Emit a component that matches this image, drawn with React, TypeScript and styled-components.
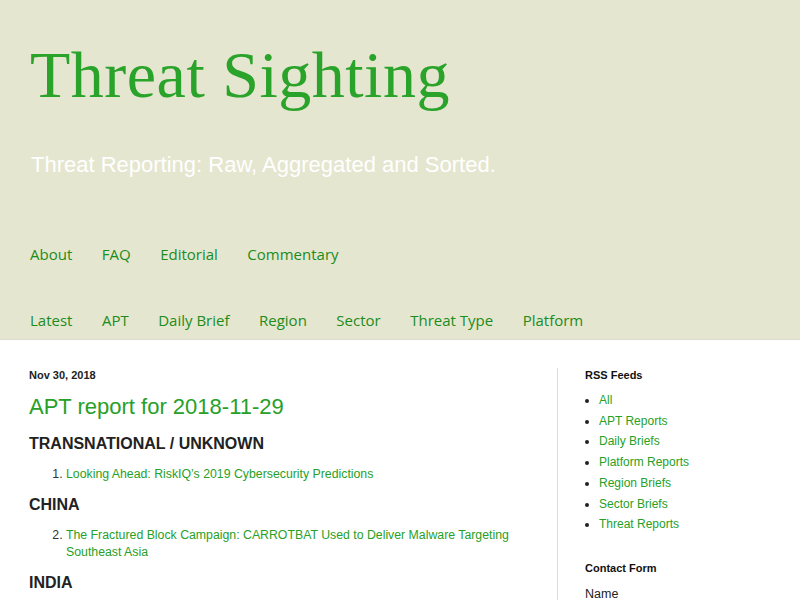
import React from "react";
import styled, { createGlobalStyle } from "styled-components";

const Global = createGlobalStyle`
  html, body { margin: 0; padding: 0; background: #fff; }
  body { font-family: "Liberation Sans", Arial, sans-serif; }
  a { text-decoration: none; color: inherit; }
`;

const GREEN = "#27a027";

const Header = styled.header`
  background: #e5e6cf;
  border-bottom: 1px solid #dcdcd0;
  height: 340px;
  box-sizing: border-box;
  padding: 30px 30px 0 30px;
  display: flex;
  flex-direction: column;
`;

const Title = styled.h1`
  margin: 0;
  font-family: "Liberation Serif", "Times New Roman", serif;
  font-weight: 400;
  font-size: 66px;
  line-height: 90px;
  color: #2aa32a;
  letter-spacing: 0.5px;
`;

const Tagline = styled.p`
  margin: 32px 0 0 1px;
  font-size: 22px;
  line-height: 26px;
  color: #ffffff;
`;

const Nav = styled.nav<{ $top: number }>`
  display: flex;
  gap: 29.5px;
  margin-top: ${(p) => p.$top}px;
  font-family: "Open Sans", sans-serif;
  font-size: 15px;
  line-height: 22px;
`;

const NavLink = styled.a`
  color: #1c8c1c;
`;

const Body = styled.div`
  display: flex;
  padding: 28px 0 0 29px;
`;

const Main = styled.main`
  width: 500px;
  padding-right: 28px;
  border-right: 1px solid #dcdcdc;
  height: 260px;
`;

const DateLine = styled.div`
  font-size: 11px;
  font-weight: 700;
  color: #222;
  line-height: 14px;
`;

const PostTitle = styled.h2`
  margin: 10px 0 0 0;
  font-size: 22px;
  font-weight: 400;
  line-height: 30px;
  color: ${GREEN};
`;

const Section = styled.h3`
  margin: 12px 0 0 0;
  font-size: 16px;
  font-weight: 700;
  line-height: 20px;
  color: #222;
`;

const List = styled.ol`
  margin: 12px 0 2px 0;
  padding-left: 37px;
  font-size: 12.3px;
  line-height: 17px;
  color: #333;
`;

const Item = styled.li`
  a { color: ${GREEN}; }
`;

const Side = styled.aside`
  padding-left: 27px;
`;

const WidgetTitle = styled.h4<{ $top?: number }>`
  margin: ${(p) => p.$top ?? 0}px 0 0 0;
  font-size: 11px;
  font-weight: 700;
  line-height: 14px;
  color: #111;
`;

const Feeds = styled.ul`
  margin: 8px 0 0 0;
  padding-left: 14px;
  font-size: 12px;
  line-height: 20.7px;
  color: #222;
`;

const Feed = styled.li`
  a { color: ${GREEN}; }
`;

const Label = styled.div`
  margin-top: 11px;
  font-size: 12.5px;
  line-height: 16px;
  color: #222;
`;

export default function App() {
  return (
    <>
      <Global />
      <Header>
        <Title>Threat Sighting</Title>
        <Tagline>Threat Reporting: Raw, Aggregated and Sorted.</Tagline>
        <Nav $top={65}>
          {["About", "FAQ", "Editorial", "Commentary"].map((t) => (
            <NavLink key={t} href="#">{t}</NavLink>
          ))}
        </Nav>
        <Nav $top={44}>
          {["Latest", "APT", "Daily Brief", "Region", "Sector", "Threat Type", "Platform"].map((t) => (
            <NavLink key={t} href="#">{t}</NavLink>
          ))}
        </Nav>
      </Header>
      <Body>
        <Main>
          <DateLine>Nov 30, 2018</DateLine>
          <PostTitle>APT report for 2018-11-29</PostTitle>
          <Section>TRANSNATIONAL / UNKNOWN</Section>
          <List start={1}>
            <Item><a href="#">Looking Ahead: RiskIQ’s 2019 Cybersecurity Predictions</a></Item>
          </List>
          <Section>CHINA</Section>
          <List start={2}>
            <Item><a href="#">The Fractured Block Campaign: CARROTBAT Used to Deliver Malware Targeting Southeast Asia</a></Item>
          </List>
          <Section>INDIA</Section>
        </Main>
        <Side>
          <WidgetTitle>RSS Feeds</WidgetTitle>
          <Feeds>
            {["All", "APT Reports", "Daily Briefs", "Platform Reports", "Region Briefs", "Sector Briefs", "Threat Reports"].map((t) => (
              <Feed key={t}><a href="#">{t}</a></Feed>
            ))}
          </Feeds>
          <WidgetTitle $top={26}>Contact Form</WidgetTitle>
          <Label>Name</Label>
        </Side>
      </Body>
    </>
  );
}
